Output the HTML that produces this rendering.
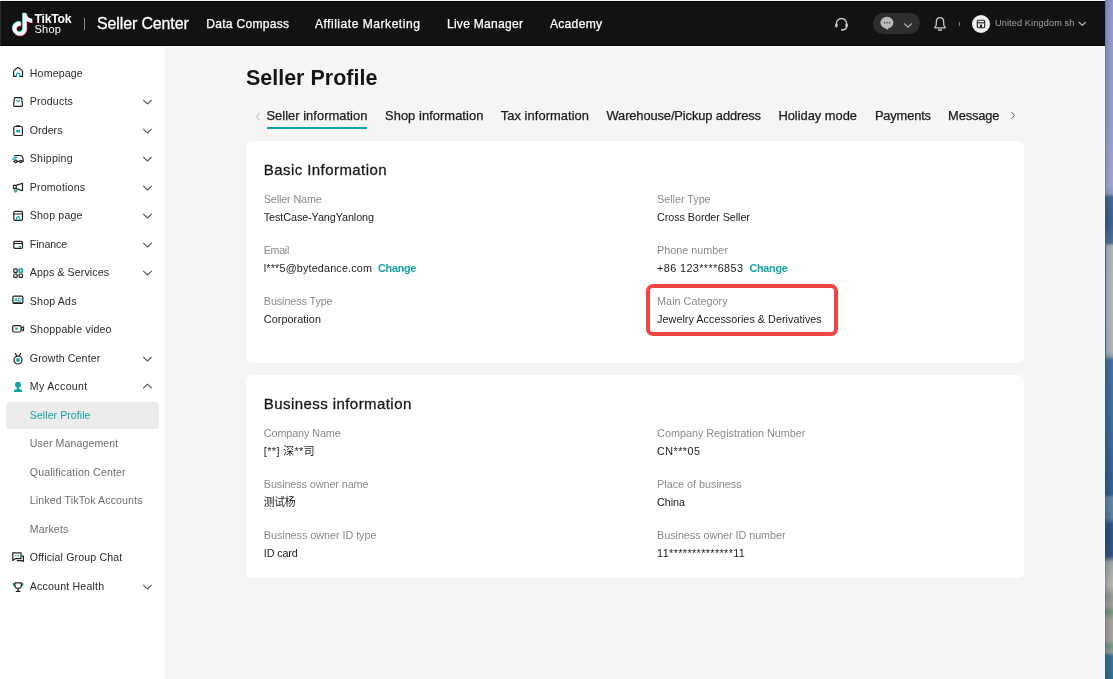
<!DOCTYPE html>
<html lang="en">
<head>
<meta charset="utf-8">
<title>Seller Profile</title>
<style>
*{box-sizing:border-box;margin:0;padding:0}
html,body{width:1113px;height:679px;overflow:hidden;background:#f5f5f5;font-family:"Liberation Sans","Noto Sans CJK SC",sans-serif;color:#222}
#root{position:absolute;left:0;top:0;width:1113px;height:679px;will-change:transform}
.abs{position:absolute}
.x{position:absolute;white-space:nowrap;line-height:1;font-weight:normal;display:block}
#hdr{position:absolute;left:0;top:0;width:1105px;height:46px;background:#121212;border-top:1px solid #f3f5f2;box-shadow:inset 0 1px 0 #040404,inset 0 -1px 0 #030303}
.ht{color:#fff}
.x.b{font-weight:bold}
.nav{font-size:12.1px;-webkit-text-stroke:0.25px #fff}
#side{position:absolute;left:0;top:46px;width:165px;height:633px;background:#fff}
#strip{position:absolute;left:1105px;top:0;width:8px;height:679px;background:linear-gradient(180deg,#8d94c6 0,#9298c8 120px,#9ea1cb 185px,#8b95bd 194px,#3f5f8e 197px,#3a5a8a 225px,#4a6a94 243px,#a7aeb6 246px,#adb3ba 300px,#a9afb4 352px,#8f9a9a 356px,#3f6c9c 360px,#38669a 420px,#2f5a8c 480px,#2c5585 494px,#5f7f9f 498px,#57789a 518px,#2a4f80 524px,#2a4c7c 556px,#9aa0a0 562px,#b4b4ac 585px,#8f968c 596px,#9a9a92 606px,#6f8f6f 612px,#a09c94 620px,#a39f98 640px,#6a9070 646px,#8a9a94 652px,#2f6f8f 656px,#2b6888 679px)}
#strip:before{content:"";position:absolute;left:0;top:0;width:8px;height:100%;background:linear-gradient(90deg,rgba(30,45,90,.38) 0,rgba(30,45,90,.12) 1.5px,rgba(30,45,90,.04) 4px,rgba(255,255,255,.06) 8px)}
.mi{font-size:10.6px;color:#2a2a2a}
.mi.sub{color:#6e6e6e}
.chev{position:absolute;left:141.7px;width:11px;height:7px}
.ico{position:absolute;left:11px;width:14px;height:14px}
.card{position:absolute;left:245.6px;width:778.8px;background:#fff;border-radius:6px}
.x.ttl{font-size:21.5px;font-weight:bold;color:#161616}
.h2{font-size:15px;color:#161616;-webkit-text-stroke:0.28px #161616}
.lb{font-size:10.8px;color:#8a8a8a}
.vl{font-size:10.8px;color:#222}
.x.lnk{color:#14a3a3;font-weight:bold}
.tab{font-size:12.9px;color:#1a1a1a;-webkit-text-stroke:0.25px #1a1a1a}
</style>
</head>
<body>
<div id="root">
<div id="strip"></div>
<header>
<div id="hdr"></div>
<svg class="abs" style="left:8.5px;top:10.7px;width:26px;height:26px" viewBox="-1 -1 26 26"><g transform="translate(1.2 1.3) scale(0.93)"><path d="M12.525.02c1.31-.02 2.61-.01 3.91-.02.08 1.53.63 3.09 1.75 4.17 1.12 1.11 2.7 1.62 4.24 1.79v4.03c-1.44-.05-2.89-.35-4.2-.97-.57-.26-1.1-.59-1.62-.93-.01 2.92.01 5.84-.02 8.75-.08 1.4-.54 2.79-1.35 3.94-1.31 1.92-3.58 3.17-5.91 3.21-1.43.08-2.86-.31-4.08-1.03-2.02-1.19-3.44-3.37-3.65-5.71-.02-.5-.03-1-.01-1.49.18-1.9 1.12-3.72 2.58-4.96 1.66-1.44 3.98-2.13 6.15-1.72.02 1.48-.04 2.96-.04 4.44-.99-.32-2.15-.23-3.02.37-.63.41-1.11 1.04-1.36 1.75-.21.51-.15 1.07-.14 1.61.24 1.64 1.82 3.02 3.5 2.87 1.12-.01 2.19-.66 2.77-1.61.19-.33.4-.67.41-1.06.1-1.79.06-3.57.07-5.36.01-4.03-.01-8.05.02-12.07z" fill="#25f4ee" transform="translate(-0.7 -0.7)"/><path d="M12.525.02c1.31-.02 2.61-.01 3.91-.02.08 1.53.63 3.09 1.75 4.17 1.12 1.11 2.7 1.62 4.24 1.79v4.03c-1.44-.05-2.89-.35-4.2-.97-.57-.26-1.1-.59-1.62-.93-.01 2.92.01 5.84-.02 8.75-.08 1.4-.54 2.79-1.35 3.94-1.31 1.92-3.58 3.17-5.91 3.21-1.43.08-2.86-.31-4.08-1.03-2.02-1.19-3.44-3.37-3.65-5.71-.02-.5-.03-1-.01-1.49.18-1.9 1.12-3.72 2.58-4.96 1.66-1.44 3.98-2.13 6.15-1.72.02 1.48-.04 2.96-.04 4.44-.99-.32-2.15-.23-3.02.37-.63.41-1.11 1.04-1.36 1.75-.21.51-.15 1.07-.14 1.61.24 1.64 1.82 3.02 3.5 2.87 1.12-.01 2.19-.66 2.77-1.61.19-.33.4-.67.41-1.06.1-1.79.06-3.57.07-5.36.01-4.03-.01-8.05.02-12.07z" fill="#fe2c55" transform="translate(0.7 0.7)"/><path d="M12.525.02c1.31-.02 2.61-.01 3.91-.02.08 1.53.63 3.09 1.75 4.17 1.12 1.11 2.7 1.62 4.24 1.79v4.03c-1.44-.05-2.89-.35-4.2-.97-.57-.26-1.1-.59-1.62-.93-.01 2.92.01 5.84-.02 8.75-.08 1.4-.54 2.79-1.35 3.94-1.31 1.92-3.58 3.17-5.91 3.21-1.43.08-2.86-.31-4.08-1.03-2.02-1.19-3.44-3.37-3.65-5.71-.02-.5-.03-1-.01-1.49.18-1.9 1.12-3.72 2.58-4.96 1.66-1.44 3.98-2.13 6.15-1.72.02 1.48-.04 2.96-.04 4.44-.99-.32-2.15-.23-3.02.37-.63.41-1.11 1.04-1.36 1.75-.21.51-.15 1.07-.14 1.61.24 1.64 1.82 3.02 3.5 2.87 1.12-.01 2.19-.66 2.77-1.61.19-.33.4-.67.41-1.06.1-1.79.06-3.57.07-5.36.01-4.03-.01-8.05.02-12.07z" fill="#fff"/></g></svg>
<div class="abs" style="left:84px;top:18px;width:1px;height:12px;background:#8a8a8a"></div>
<svg class="abs" style="left:833px;top:15.5px;width:17px;height:17px" viewBox="0 0 17 17"><path d="M3.4 9 V7.6 A5.1 5.1 0 0 1 13.6 7.6 V9 M13.6 10.6 Q13.6 13.6 10.2 13.8" fill="none" stroke="#cfcfcf" stroke-width="1.3" stroke-linecap="round"/><rect x="2.2" y="7.4" width="2.4" height="4" rx="1.1" fill="#cfcfcf"/><rect x="12.4" y="7.4" width="2.4" height="4" rx="1.1" fill="#cfcfcf"/><rect x="8" y="13" width="2.6" height="1.7" rx=".8" fill="#cfcfcf"/></svg>
<div class="abs" style="left:873px;top:13px;width:47px;height:21px;border-radius:10.5px;background:#2f2f2f"></div>
<svg class="abs" style="left:878.5px;top:16px;width:16px;height:15px" viewBox="0 0 16 15"><ellipse cx="7.9" cy="6.6" rx="6.5" ry="5.8" fill="#b9b9b9"/><path d="M5.6 11.4 L8.3 13.9 L9.9 11.6 Z" fill="#b9b9b9"/><circle cx="5.5" cy="6.8" r=".75" fill="#2f2f2f"/><circle cx="8" cy="6.8" r=".75" fill="#2f2f2f"/><circle cx="10.5" cy="6.8" r=".75" fill="#2f2f2f"/></svg>
<svg class="abs" style="left:903.3px;top:22.2px;width:10px;height:7px" viewBox="0 0 10 7"><path d="M1.6 1.8 L5 5.2 L8.4 1.8" fill="none" stroke="#c4c4c4" stroke-width="1.15" stroke-linecap="round" stroke-linejoin="round"/></svg>
<svg class="abs" style="left:931.5px;top:15.5px;width:16px;height:17px" viewBox="0 0 16 17"><path d="M8 1.6 C5.6 1.6 4.3 3.6 4.3 6 V8.6 C4.3 10 3.4 10.8 2.6 11.8 H13.4 C12.6 10.8 11.7 10 11.7 8.6 V6 C11.7 3.6 10.4 1.6 8 1.6 Z" fill="none" stroke="#cfcfcf" stroke-width="1.2" stroke-linejoin="round"/><path d="M6.5 14 H9.5" stroke="#cfcfcf" stroke-width="1.3" stroke-linecap="round"/></svg>
<div class="abs" style="left:959px;top:21.5px;width:1px;height:4.5px;background:#6b77ad"></div>
<div class="abs" style="left:971.7px;top:14.6px;width:18.6px;height:18.6px;border-radius:50%;background:#f1f1f1"></div>
<svg class="abs" style="left:976px;top:19px;width:10px;height:10px" viewBox="0 0 10 10"><rect x="1.3" y="1.3" width="7.4" height="7.4" rx="1" fill="none" stroke="#222" stroke-width="1.1"/><path d="M1.3 3.8 H8.7" stroke="#222" stroke-width="1.1"/><rect x="3.9" y="5.6" width="2.2" height="3" fill="#222"/></svg>
<svg class="abs" style="left:1078.4px;top:20.9px;width:9px;height:6px" viewBox="0 0 9 6"><path d="M1.1 1.3 L4.3 4.4 L7.5 1.3" fill="none" stroke="#b4b4b4" stroke-width="1.2" stroke-linecap="round" stroke-linejoin="round"/></svg>
<span class="x ht b" id="h1" style="left:34.5px;top:12.67px;letter-spacing:-0.209px;font-size:12.2px">TikTok</span>
<span class="x ht" id="h2" style="left:34.5px;top:23.69px;letter-spacing:0.249px;font-size:11px">Shop</span>
<span class="x ht" id="h3" style="left:97.0px;top:16.46px;letter-spacing:-0.137px;font-size:16px;-webkit-text-stroke:0.3px #fff">Seller Center</span>
<span class="x ht nav" id="h4" style="left:206.2px;top:17.76px;letter-spacing:0.267px">Data Compass</span>
<span class="x ht nav" id="h5" style="left:314.9px;top:17.76px;letter-spacing:0.505px">Affiliate Marketing</span>
<span class="x ht nav" id="h6" style="left:446.9px;top:17.76px;letter-spacing:0.268px">Live Manager</span>
<span class="x ht nav" id="h7" style="left:549.9px;top:17.76px;letter-spacing:0.297px">Academy</span>
<span class="x ht" id="h8" style="left:995.0px;top:19.21px;letter-spacing:0.109px;font-size:9.2px;color:#a2a2a2">United Kingdom sh</span>
</header>
<nav>
<div id="side"></div>
<svg class="ico" style="top:66px" viewBox="0 0 14 14"><path fill="none" stroke="#222" stroke-width="1.2" stroke-linecap="round" stroke-linejoin="round" d="M2.6 10.4 V5.6 Q2.6 4.9 3.2 4.4 L6.4 1.8 Q7.05 1.3 7.7 1.8 L10.9 4.4 Q11.5 4.9 11.5 5.6 V10.4 H8.9 M2.6 10.4 H5.2"/><path fill="none" stroke="#14a3a3" stroke-width="1.2" stroke-linecap="round" stroke-linejoin="round" d="M5.4 10.6 V8.5 Q5.4 7.2 7.05 7.2 Q8.7 7.2 8.7 8.5 V10.6"/></svg>
<svg class="ico" style="top:94px" viewBox="0 0 14 14"><path fill="none" stroke="#222" stroke-width="1.2" stroke-linecap="round" stroke-linejoin="round" d="M4.3 3.6 H9.9 Q10.6 3.6 10.7 4.3 L11.5 11 Q11.6 12.3 10.4 12.3 H3.8 Q2.6 12.3 2.7 11 L3.5 4.3 Q3.6 3.6 4.3 3.6 Z"/><path fill="none" stroke="#14a3a3" stroke-width="1.2" stroke-linecap="round" stroke-linejoin="round" d="M5.5 6.4 Q7.1 8.6 8.7 6.4"/></svg>
<svg class="chev" style="top:98.8px" viewBox="0 0 11 7"><path d="M1.5 1.2 L5.5 5 L9.5 1.2" fill="none" stroke="#555" stroke-width="1.05" stroke-linecap="round" stroke-linejoin="round"/></svg>
<svg class="ico" style="top:123px" viewBox="0 0 14 14"><rect fill="none" stroke="#222" stroke-width="1.2" stroke-linecap="round" stroke-linejoin="round" x="2.8" y="3.5" width="8.6" height="9" rx="1.3"/><path fill="none" stroke="#222" stroke-width="1.5" stroke-linecap="round" d="M5.6 3 H8.6"/><rect x="5.2" y="7" width="3.8" height="2.3" fill="#14a3a3"/></svg>
<svg class="chev" style="top:127.8px" viewBox="0 0 11 7"><path d="M1.5 1.2 L5.5 5 L9.5 1.2" fill="none" stroke="#555" stroke-width="1.05" stroke-linecap="round" stroke-linejoin="round"/></svg>
<svg class="ico" style="top:151px" viewBox="0 0 14 14"><path fill="none" stroke="#222" stroke-width="1.2" stroke-linecap="round" stroke-linejoin="round" d="M3.6 4.5 H8.6 Q11.8 4.6 12.2 8.2 V10.4 H11.2 M8.4 10.4 H6.2 M3.4 10.4 H2.8"/><circle fill="none" stroke="#222" stroke-width="1.2" stroke-linecap="round" stroke-linejoin="round" cx="4.8" cy="10.5" r="1.2"/><circle fill="none" stroke="#222" stroke-width="1.2" stroke-linecap="round" stroke-linejoin="round" cx="9.8" cy="10.5" r="1.2"/><path fill="none" stroke="#14a3a3" stroke-width="1.3" stroke-linecap="round" d="M2.8 6.4 H5.8 M1.6 8.2 H5"/></svg>
<svg class="chev" style="top:155.8px" viewBox="0 0 11 7"><path d="M1.5 1.2 L5.5 5 L9.5 1.2" fill="none" stroke="#555" stroke-width="1.05" stroke-linecap="round" stroke-linejoin="round"/></svg>
<svg class="ico" style="top:180px" viewBox="0 0 14 14"><path fill="none" stroke="#222" stroke-width="1.2" stroke-linecap="round" stroke-linejoin="round" d="M2.5 5.4 H5.2 L11.5 3.3 V10.7 L5.2 8.6 H2.5 Z M5.2 5.4 V8.6"/><path fill="none" stroke="#14a3a3" stroke-width="1.3" stroke-linecap="round" d="M3.8 9.8 V11.2 Q3.8 12 4.6 12 Q5.4 12 5.4 11.2 V9.8"/></svg>
<svg class="chev" style="top:184.8px" viewBox="0 0 11 7"><path d="M1.5 1.2 L5.5 5 L9.5 1.2" fill="none" stroke="#555" stroke-width="1.05" stroke-linecap="round" stroke-linejoin="round"/></svg>
<svg class="ico" style="top:208px" viewBox="0 0 14 14"><rect fill="none" stroke="#222" stroke-width="1.2" stroke-linecap="round" stroke-linejoin="round" x="2.8" y="3.4" width="8.7" height="9" rx="1.3"/><path fill="none" stroke="#222" stroke-width="1.2" stroke-linecap="round" stroke-linejoin="round" d="M2.8 6 H11.5"/><path fill="none" stroke="#14a3a3" stroke-width="1.2" stroke-linecap="round" stroke-linejoin="round" d="M5.6 12.2 V9.6 L7.15 8.4 L8.7 9.6 V12.2"/></svg>
<svg class="chev" style="top:212.8px" viewBox="0 0 11 7"><path d="M1.5 1.2 L5.5 5 L9.5 1.2" fill="none" stroke="#555" stroke-width="1.05" stroke-linecap="round" stroke-linejoin="round"/></svg>
<svg class="ico" style="top:237px" viewBox="0 0 14 14"><rect fill="none" stroke="#222" stroke-width="1.2" stroke-linecap="round" stroke-linejoin="round" x="2.8" y="4.4" width="8.7" height="7" rx="1.2"/><path fill="none" stroke="#222" stroke-width="1" d="M2.8 6.5 H11.5"/><path fill="none" stroke="#14a3a3" stroke-width="1.4" d="M7.8 9.7 H10"/></svg>
<svg class="chev" style="top:241.8px" viewBox="0 0 11 7"><path d="M1.5 1.2 L5.5 5 L9.5 1.2" fill="none" stroke="#555" stroke-width="1.05" stroke-linecap="round" stroke-linejoin="round"/></svg>
<svg class="ico" style="top:265px" viewBox="0 0 14 14"><rect fill="none" stroke="#222" stroke-width="1.2" stroke-linecap="round" stroke-linejoin="round" x="2.8" y="3.9" width="3.4" height="3.4" rx=".9"/><rect x="7.5" y="3.3" width="4.6" height="4.6" rx="1" fill="#14a3a3"/><rect x="9" y="4.8" width="1.6" height="1.6" fill="#fff"/><rect fill="none" stroke="#222" stroke-width="1.2" stroke-linecap="round" stroke-linejoin="round" x="2.8" y="9" width="3.4" height="3.4" rx=".9"/><rect fill="none" stroke="#222" stroke-width="1.2" stroke-linecap="round" stroke-linejoin="round" x="8.1" y="9" width="3.4" height="3.4" rx=".9"/></svg>
<svg class="chev" style="top:269.8px" viewBox="0 0 11 7"><path d="M1.5 1.2 L5.5 5 L9.5 1.2" fill="none" stroke="#555" stroke-width="1.05" stroke-linecap="round" stroke-linejoin="round"/></svg>
<svg class="ico" style="top:294px" viewBox="0 0 14 14"><rect fill="none" stroke="#222" stroke-width="1.2" stroke-linecap="round" stroke-linejoin="round" x="1.9" y="2.2" width="10" height="7" rx="1.3"/><path fill="none" stroke="#14a3a3" stroke-width=".9" stroke-linejoin="round" d="M3.6 7.4 L5 4.2 L6.4 7.4 M4.1 6.4 H5.9 M7.6 4.2 V7.4 H8.3 Q10.2 7.4 10.2 5.8 Q10.2 4.2 8.3 4.2 Z"/><path fill="none" stroke="#222" stroke-width="1.6" stroke-linecap="round" d="M2.9 9.3 H10.9"/></svg>
<svg class="ico" style="top:322px" viewBox="0 0 14 14"><rect fill="none" stroke="#222" stroke-width="1.2" stroke-linecap="round" stroke-linejoin="round" x="1.7" y="3.6" width="8.4" height="6.4" rx="1.5"/><path fill="none" stroke="#222" stroke-width="1.1" stroke-linejoin="round" d="M10.5 6.1 L12.6 4.8 V8.8 L10.5 7.5"/><path d="M4.4 5 L7.4 6.8 L4.4 8.6 Z" fill="#14a3a3"/></svg>
<svg class="ico" style="top:351px" viewBox="0 0 14 14"><circle fill="none" stroke="#222" stroke-width="1.2" stroke-linecap="round" stroke-linejoin="round" cx="7" cy="9" r="4"/><path fill="none" stroke="#222" stroke-width="1.2" stroke-linecap="round" stroke-linejoin="round" d="M4.4 2.6 L5.9 5.2 M9.6 2.6 L8.1 5.2"/><circle cx="7" cy="9" r="1.9" fill="#14a3a3"/></svg>
<svg class="chev" style="top:355.8px" viewBox="0 0 11 7"><path d="M1.5 1.2 L5.5 5 L9.5 1.2" fill="none" stroke="#555" stroke-width="1.05" stroke-linecap="round" stroke-linejoin="round"/></svg>
<svg class="ico" style="top:379px" viewBox="0 0 14 14"><circle cx="7" cy="5.8" r="3" fill="#14a3a3"/><path d="M6 8 H8 V9.9 Q11.2 10.3 11.4 13 H2.6 Q2.8 10.3 6 9.9 Z" fill="#14a3a3"/></svg>
<svg class="chev" style="top:383.1px" viewBox="0 0 11 7"><path d="M1.5 5 L5.5 1.2 L9.5 5" fill="none" stroke="#555" stroke-width="1.05" stroke-linecap="round" stroke-linejoin="round"/></svg>
<div class="abs" style="left:6px;top:402px;width:153px;height:26.5px;background:#ececec;border-radius:4px"></div>
<svg class="ico" style="top:550px" viewBox="0 0 14 14"><path fill="none" stroke="#222" stroke-width="1.2" stroke-linecap="round" stroke-linejoin="round" d="M1.8 2.8 H10 V8.6 H4.6 L1.8 10.4 Z"/><path fill="none" stroke="#222" stroke-width="1.2" stroke-linecap="round" stroke-linejoin="round" d="M11 6.2 H12.4 V11.6 L10.8 10.6 H6.2"/><path fill="none" stroke="#14a3a3" stroke-width="1" stroke-dasharray="1.2 .5" d="M3.6 5.6 H8.4"/></svg>
<svg class="ico" style="top:579px" viewBox="0 0 14 14"><path d="M3.8 4 H2.4 Q1.4 4 1.6 5.2 Q2 7.4 4.2 7.6 Z M10.4 4 H11.8 Q12.8 4 12.6 5.2 Q12.2 7.4 10 7.6 Z" fill="#14a3a3"/><path fill="none" stroke="#222" stroke-width="1.2" stroke-linecap="round" stroke-linejoin="round" d="M3.9 3.8 H10.3 V6.2 Q10.3 9.4 7.1 9.4 Q3.9 9.4 3.9 6.2 Z M7.1 9.4 V12 M5.2 12.3 H9"/></svg>
<svg class="chev" style="top:583.8px" viewBox="0 0 11 7"><path d="M1.5 1.2 L5.5 5 L9.5 1.2" fill="none" stroke="#555" stroke-width="1.05" stroke-linecap="round" stroke-linejoin="round"/></svg>
<div class="x mi" id="m0" style="left:29.8px;top:68.03px;letter-spacing:0.159px">Homepage</div>
<div class="x mi" id="m1" style="left:29.8px;top:96.03px;letter-spacing:0.173px">Products</div>
<div class="x mi" id="m2" style="left:29.8px;top:125.03px;letter-spacing:0.068px">Orders</div>
<div class="x mi" id="m3" style="left:29.8px;top:153.03px;letter-spacing:0.221px">Shipping</div>
<div class="x mi" id="m4" style="left:29.8px;top:182.03px;letter-spacing:0.181px">Promotions</div>
<div class="x mi" id="m5" style="left:29.8px;top:210.03px;letter-spacing:0.170px">Shop page</div>
<div class="x mi" id="m6" style="left:29.8px;top:239.03px;letter-spacing:-0.043px">Finance</div>
<div class="x mi" id="m7" style="left:29.8px;top:267.03px;letter-spacing:0.104px">Apps &amp; Services</div>
<div class="x mi" id="m8" style="left:29.8px;top:296.03px;letter-spacing:0.193px">Shop Ads</div>
<div class="x mi" id="m9" style="left:29.8px;top:324.03px;letter-spacing:0.198px">Shoppable video</div>
<div class="x mi" id="m10" style="left:29.8px;top:353.03px;letter-spacing:0.131px">Growth Center</div>
<div class="x mi" id="m11" style="left:29.8px;top:381.03px;letter-spacing:0.283px">My Account</div>
<div class="x mi" id="m12" style="left:29.8px;top:410.03px;letter-spacing:0.046px;color:#14a3a3">Seller Profile</div>
<div class="x mi sub" id="m13" style="left:29.8px;top:438.03px;letter-spacing:0.096px">User Management</div>
<div class="x mi sub" id="m14" style="left:29.8px;top:467.03px;letter-spacing:0.148px">Qualification Center</div>
<div class="x mi sub" id="m15" style="left:29.8px;top:495.03px;letter-spacing:0.122px">Linked TikTok Accounts</div>
<div class="x mi sub" id="m16" style="left:29.8px;top:524.03px;letter-spacing:0.130px">Markets</div>
<div class="x mi" id="m17" style="left:29.8px;top:552.03px;letter-spacing:0.142px">Official Group Chat</div>
<div class="x mi" id="m18" style="left:29.8px;top:581.03px;letter-spacing:0.189px">Account Health</div>
</nav>
<main>
<svg class="abs" style="left:254.5px;top:111.5px;width:6px;height:9px" viewBox="0 0 6 9"><path d="M4.4 1 L1.4 4.5 L4.4 8" fill="none" stroke="#b0b0b0" stroke-width="1" stroke-linecap="round" stroke-linejoin="round"/></svg>
<svg class="abs" style="left:1009.5px;top:110.7px;width:6px;height:9px" viewBox="0 0 6 9"><path d="M1.8 1.4 L4.4 4.5 L1.8 7.6" fill="none" stroke="#666" stroke-width="1" stroke-linecap="round" stroke-linejoin="round"/></svg>
<div class="abs" style="left:267px;top:127px;width:100px;height:2px;background:#14a3a3"></div>
<div class="abs" style="left:165px;top:46px;width:940px;height:1px;background:#fff"></div>
<div class="abs" style="left:1104px;top:46px;width:1px;height:633px;background:#fdfdfd"></div>
<div class="abs" style="left:1105px;top:245px;width:1.3px;height:112px;background:#34608f"></div>
<div class="abs" style="left:0;top:1px;width:1px;height:45px;background:#2b2b2b"></div>
<div class="card" style="top:140.8px;height:222.6px"></div>
<div class="card" style="top:374.5px;height:203.9px"></div>
<div class="abs" style="left:646px;top:284px;width:191.5px;height:52px;border:4px solid #f04545;border-radius:7px"></div>
<h1 class="x ttl" id="ttl" style="left:245.9px;top:67.8px;letter-spacing:0.003px">Seller Profile</h1>
<div class="x tab" id="t1" style="left:266.4px;top:110.08px;letter-spacing:0.038px">Seller information</div>
<div class="x tab" id="t2" style="left:385.0px;top:110.08px;letter-spacing:0.058px">Shop information</div>
<div class="x tab" id="t3" style="left:500.7px;top:110.08px;letter-spacing:0.065px">Tax information</div>
<div class="x tab" id="t4" style="left:606.5px;top:110.08px;letter-spacing:-0.115px">Warehouse/Pickup address</div>
<div class="x tab" id="t5" style="left:778.4px;top:110.08px;letter-spacing:-0.019px">Holiday mode</div>
<div class="x tab" id="t6" style="left:874.9px;top:110.08px;letter-spacing:-0.166px">Payments</div>
<div class="x tab" id="t7" style="left:948.1px;top:110.08px;letter-spacing:-0.159px">Message</div>
<h2 class="x h2" id="c1h" style="left:263.8px;top:162.3px;letter-spacing:0.430px">Basic Information</h2>
<div class="x lb" id="a1" style="left:263.8px;top:193.86px;letter-spacing:-0.137px">Seller Name</div>
<div class="x vl" id="a2" style="left:263.8px;top:211.86px;letter-spacing:-0.087px">TestCase-YangYanlong</div>
<div class="x lb" id="a3" style="left:263.8px;top:244.86px;letter-spacing:-0.380px">Email</div>
<div class="x vl" id="a4" style="left:263.8px;top:262.86px;letter-spacing:0.168px">l***5@bytedance.com</div>
<div class="x vl lnk" id="a4c" style="left:378.1px;top:262.86px;letter-spacing:-0.266px">Change</div>
<div class="x lb" id="a5" style="left:263.8px;top:295.86px;letter-spacing:-0.102px">Business Type</div>
<div class="x vl" id="a6" style="left:263.8px;top:313.86px;letter-spacing:0.071px">Corporation</div>
<div class="x lb" id="b1" style="left:657.1px;top:193.86px;letter-spacing:-0.030px">Seller Type</div>
<div class="x vl" id="b2" style="left:657.1px;top:211.86px;letter-spacing:-0.075px">Cross Border Seller</div>
<div class="x lb" id="b3" style="left:657.1px;top:244.86px;letter-spacing:0.005px">Phone number</div>
<div class="x vl" id="b4" style="left:657.1px;top:262.86px;letter-spacing:0.403px">+86 123****6853</div>
<div class="x vl lnk" id="b4c" style="left:749.4px;top:262.86px;letter-spacing:-0.232px">Change</div>
<div class="x lb" id="b5" style="left:657.1px;top:295.86px;letter-spacing:0.022px">Main Category</div>
<div class="x vl" id="b6" style="left:657.1px;top:313.86px;letter-spacing:0.027px">Jewelry Accessories &amp; Derivatives</div>
<h2 class="x h2" id="c2h" style="left:263.8px;top:396.3px;letter-spacing:0.433px">Business information</h2>
<div class="x lb" id="d1" style="left:263.8px;top:427.86px;letter-spacing:-0.101px">Company Name</div>
<div class="x vl" id="d2" style="left:263.8px;top:445.86px;letter-spacing:0.410px">[**] 深**司</div>
<div class="x lb" id="d3" style="left:263.8px;top:478.86px;letter-spacing:-0.086px">Business owner name</div>
<div class="x vl" id="d4" style="left:263.8px;top:496.86px;letter-spacing:-0.264px">测试杨</div>
<div class="x lb" id="d5" style="left:263.8px;top:529.86px;letter-spacing:-0.037px">Business owner ID type</div>
<div class="x vl" id="d6" style="left:263.8px;top:547.86px;letter-spacing:-0.145px">ID card</div>
<div class="x lb" id="e1" style="left:657.1px;top:427.86px;letter-spacing:0.002px">Company Registration Number</div>
<div class="x vl" id="e2" style="left:657.1px;top:445.86px;letter-spacing:0.440px">CN***05</div>
<div class="x lb" id="e3" style="left:657.1px;top:478.86px;letter-spacing:-0.007px">Place of business</div>
<div class="x vl" id="e4" style="left:657.1px;top:496.86px;letter-spacing:-0.064px">China</div>
<div class="x lb" id="e5" style="left:657.1px;top:529.86px;letter-spacing:-0.051px">Business owner ID number</div>
<div class="x vl" id="e6" style="left:657.1px;top:547.86px;letter-spacing:0.381px">11**************11</div>
</main>
</div>
</body>
</html>
